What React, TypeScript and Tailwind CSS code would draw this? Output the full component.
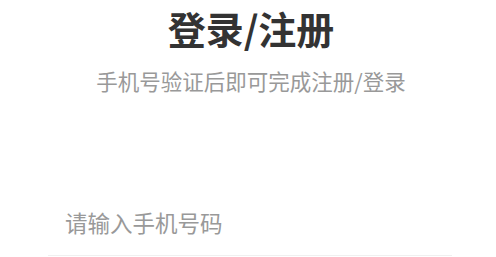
import { useState } from 'react';

/**
 * Phone login / register header with a single phone input
 */
export default function App() {
  const [phone, setPhone] = useState('');

  return (
    <div className="min-h-screen bg-white font-['Noto_Sans_CJK_SC','Noto_Sans',sans-serif]">
      {/* Heading */}
      <div className="flex flex-col items-center pl-[6px]">
        <h1 className="text-[38px] leading-[56px] font-bold text-[#333333]">登录/注册</h1>
        <p className="mt-[9px] text-[21.5px] leading-[32px] text-[#999999]">
          手机号验证后即可完成注册/登录
        </p>
      </div>

      {/* Phone input */}
      <div className="ml-[48px] mr-[44px] mt-[92px] border-b border-[#f0f0f0]">
        <input
          type="tel"
          value={phone}
          onChange={(e) => setPhone(e.target.value)}
          placeholder="请输入手机号码"
          className="w-full h-[66px] px-[17px] text-[22.5px] text-[#333333] placeholder:text-[#999999] outline-none bg-transparent"
        />
      </div>
    </div>
  );
}
